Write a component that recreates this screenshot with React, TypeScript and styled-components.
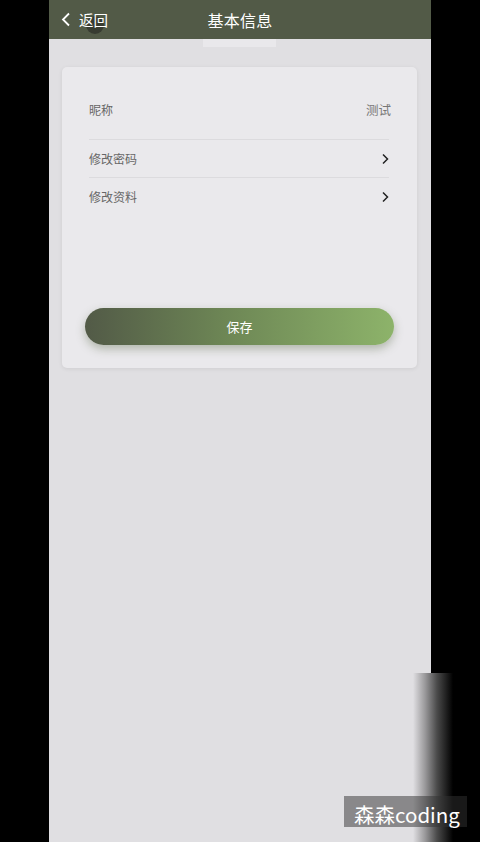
import styled, { createGlobalStyle } from "styled-components";

const Global = createGlobalStyle`
  html, body {
    margin: 0;
    padding: 0;
    background: #000;
  }
  body {
    font-family: "Noto Sans CJK SC", "Noto Sans", sans-serif;
  }
`;

const Screen = styled.div`
  position: relative;
  width: 480px;
  height: 842px;
  background: #000;
  display: flex;
  justify-content: center;
  overflow: hidden;
`;

const Phone = styled.div`
  position: relative;
  width: 382px;
  height: 842px;
  background: #e0dfe2;
  display: flex;
  flex-direction: column;
`;

const Header = styled.div`
  position: relative;
  height: 39px;
  background: #525a47;
  display: flex;
  align-items: center;
  justify-content: center;
  flex-shrink: 0;
`;

const Back = styled.div`
  position: absolute;
  left: 12px;
  top: 0;
  height: 39px;
  display: flex;
  align-items: center;
  gap: 8px;
  color: #fff;
  font-size: 14.5px;
`;

const Ripple = styled.span`
  position: absolute;
  left: 25px;
  top: 16px;
  width: 18px;
  height: 18px;
  border-radius: 50%;
  background: rgba(50, 54, 46, 0.85);
`;

const BackText = styled.span`
  position: relative;
`;

const Title = styled.div`
  color: #fff;
  font-size: 16px;
  letter-spacing: 0.3px;
`;

const Tab = styled.div`
  position: absolute;
  left: 154px;
  top: 39px;
  width: 73px;
  height: 8px;
  background: #e9e8eb;
`;

const Card = styled.div`
  margin: 28px 14px 0 13px;
  background: #eae9ec;
  border-radius: 5px;
  box-shadow: 0 1px 4px rgba(0, 0, 0, 0.08);
  padding: 23px 28px 23px 27px;
  display: flex;
  flex-direction: column;
`;

const Row = styled.div<{ $first?: boolean; $last?: boolean }>`
  height: ${(p) => (p.$first ? "38px" : "37px")};
  padding-bottom: ${(p) => (p.$first ? "11px" : "0")};
  display: flex;
  align-items: center;
  justify-content: space-between;
  border-bottom: ${(p) => (p.$last ? "none" : "1px solid #dcdbde")};
  font-size: 12px;
  color: #666;
`;

const Value = styled.span`
  color: #777;
  font-size: 12.5px;
  margin-right: -2px;
`;

const SaveButton = styled.button`
  margin: 93px -5px 0 -4px;
  height: 37px;
  border: none;
  border-radius: 19px;
  background: linear-gradient(90deg, #525a47 0%, #6d8655 45%, #8db36a 100%);
  box-shadow: 0 4px 10px rgba(70, 85, 50, 0.35);
  color: #fff;
  font-family: inherit;
  font-size: 13px;
  padding: 0;
`;

const EdgeFade = styled.div`
  position: absolute;
  left: 413px;
  top: 673px;
  width: 40px;
  height: 169px;
  background: linear-gradient(90deg, #e0dfe2 0%, #9a999b 30%, #4a4a4a 60%, #000 100%);
`;

const Watermark = styled.div`
  position: absolute;
  left: 344px;
  top: 796px;
  width: 123px;
  height: 31px;
  background: rgba(50, 50, 50, 0.5);
  color: #fff;
  font-size: 20.5px;
  line-height: 36px;
  padding-left: 10px;
  box-sizing: border-box;
  white-space: nowrap;
`;

const ChevronLeft = () => (
  <svg width="10" height="15" viewBox="0 0 10 15" fill="none">
    <path d="M8 1.5 2 7.5l6 6" stroke="#fff" strokeWidth="1.8" />
  </svg>
);

const ChevronRight = () => (
  <svg width="8" height="12" viewBox="0 0 8 12" fill="none">
    <path d="m2 1.5 4.5 4.5L2 10.5" stroke="#222" strokeWidth="1.5" />
  </svg>
);

export default function App() {
  return (
    <>
      <Global />
      <Screen>
        <Phone>
          <Header>
            <Back>
              <ChevronLeft />
              <Ripple />
              <BackText>返回</BackText>
            </Back>
            <Title>基本信息</Title>
          </Header>
          <Tab />
          <Card>
            <Row $first>
              <span>昵称</span>
              <Value>测试</Value>
            </Row>
            <Row>
              <span>修改密码</span>
              <ChevronRight />
            </Row>
            <Row $last>
              <span>修改资料</span>
              <ChevronRight />
            </Row>
            <SaveButton>保存</SaveButton>
          </Card>
        </Phone>
        <EdgeFade />
        <Watermark>森森coding</Watermark>
      </Screen>
    </>
  );
}
